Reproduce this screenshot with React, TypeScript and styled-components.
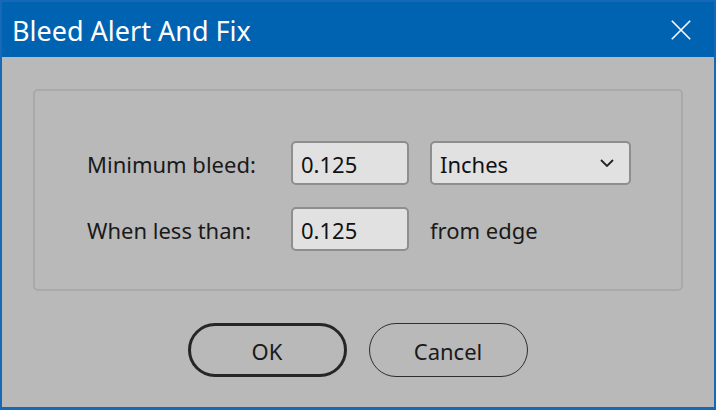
import React from "react";
import styled, { createGlobalStyle } from "styled-components";

const Global = createGlobalStyle`
  html, body { margin: 0; padding: 0; }
  body { width: 716px; height: 410px; overflow: hidden; background: #1769b8; }
  * { box-sizing: border-box; }
`;

const Window = styled.div`
  width: 716px;
  height: 410px;
  border: 2px solid #1769b8;
  border-bottom-width: 3px;
  display: flex;
  flex-direction: column;
  font-family: "Noto Sans", "Open Sans", sans-serif;
  color: #1a1a1a;
`;

const TitleBar = styled.div`
  height: 55px;
  background: #0063b1;
  display: flex;
  align-items: center;
  justify-content: space-between;
  padding: 0 23px 0 10px;
  color: #ffffff;
  flex-shrink: 0;
`;

const Title = styled.div`
  font-size: 27px;
  letter-spacing: 0px;
  padding-top: 2px;
`;

const CloseButton = styled.div`
  width: 20px;
  height: 20px;
  display: flex;
  align-items: center;
  justify-content: center;
  margin-top: 1px;
`;

const Body = styled.div`
  flex: 1;
  background: #b9b9b9;
  padding: 32px 31px 0 31px;
  display: flex;
  flex-direction: column;
  align-items: center;
`;

const GroupBox = styled.div`
  width: 650px;
  height: 202px;
  border: 2px solid #a9a9a9;
  border-radius: 5px;
  padding: 50px 0 0 52px;
`;

const FormGrid = styled.div`
  display: grid;
  grid-template-columns: 183px 118px auto;
  column-gap: 21px;
  row-gap: 22px;
  align-items: center;
`;

const Label = styled.div`
  font-size: 22px;
  padding-top: 2px;
`;

const Field = styled.div<{ $w?: number }>`
  width: ${(p) => p.$w ?? 118}px;
  height: 44px;
  background: #e1e1e1;
  border: 2px solid #8e8e8e;
  border-radius: 5px;
  display: flex;
  align-items: center;
  justify-content: space-between;
  padding: 0 15px 0 8px;
  font-size: 22px;
  color: #111111;
`;

const FieldText = styled.span`
  padding-top: 1px;
`;

const Buttons = styled.div`
  display: flex;
  gap: 22px;
  margin-top: 32px;
  padding-right: 1px;
`;

const Button = styled.div<{ $primary?: boolean }>`
  width: 159px;
  height: 54px;
  border-radius: 27px;
  border: ${(p) => (p.$primary ? "3px solid #262626" : "1.5px solid #2e2e2e")};
  display: flex;
  align-items: center;
  justify-content: center;
  font-size: 22px;
  color: #1a1a1a;
  padding-top: 1px;
`;

export default function App() {
  return (
    <>
      <Global />
      <Window>
        <TitleBar>
          <Title>Bleed Alert And Fix</Title>
          <CloseButton>
            <svg width="20" height="20" viewBox="0 0 20 20">
              <path d="M0.8 0.8 L19.2 19.2 M19.2 0.8 L0.8 19.2" stroke="#ffffff" strokeWidth="1.6" fill="none" />
            </svg>
          </CloseButton>
        </TitleBar>
        <Body>
          <GroupBox>
            <FormGrid>
              <Label>Minimum bleed:</Label>
              <Field>
                <FieldText>0.125</FieldText>
              </Field>
              <Field $w={201}>
                <FieldText>Inches</FieldText>
                <svg width="14" height="8" viewBox="0 0 14 8">
                  <path d="M1 1 L7 7 L13 1" stroke="#222222" strokeWidth="1.8" fill="none" />
                </svg>
              </Field>
              <Label>When less than:</Label>
              <Field>
                <FieldText>0.125</FieldText>
              </Field>
              <Label>from edge</Label>
            </FormGrid>
          </GroupBox>
          <Buttons>
            <Button $primary>OK</Button>
            <Button>Cancel</Button>
          </Buttons>
        </Body>
      </Window>
    </>
  );
}
